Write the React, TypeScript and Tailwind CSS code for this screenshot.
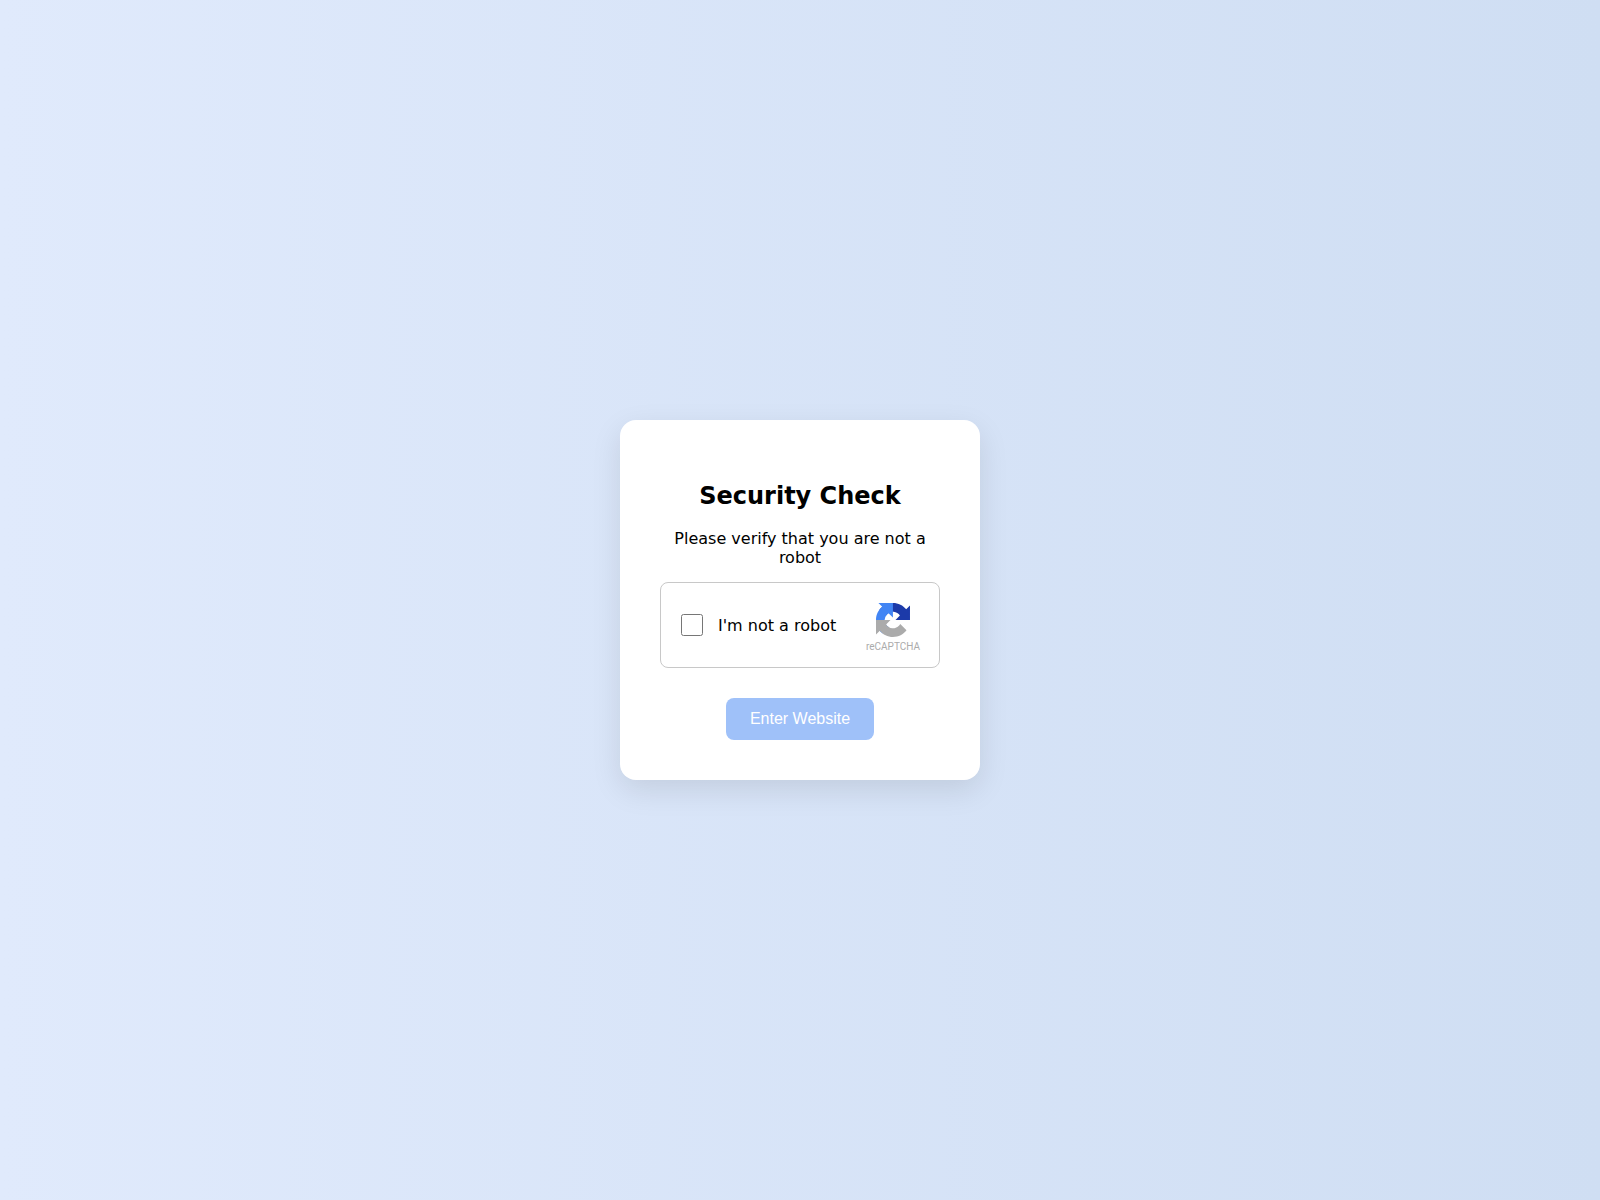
import { useState } from 'react';

function RecaptchaLogo() {
  return (
    <div className="flex w-13 shrink-0 flex-col items-center pt-[5px]">
      <svg viewBox="0 0 64 64" className="h-[34px] w-[34px]" aria-hidden="true">
        <path fill="#1c3aa9" d="M64 31.955l-.033-1.37V4.687l-7.16 7.16C50.948 4.674 42.033.093 32.05.093c-10.4 0-19.622 4.96-25.458 12.64l11.736 11.86a15.55 15.55 0 0 1 4.754-5.334c2.05-1.6 4.952-2.906 8.968-2.906.485 0 .86.057 1.135.163 4.976.393 9.288 3.14 11.828 7.124l-8.307 8.307L64 31.953" />
        <path fill="#4285f4" d="M31.862.094l-1.37.033H4.594l7.16 7.16C4.58 13.147 0 22.06 0 32.046c0 10.4 4.96 19.622 12.64 25.458L24.5 45.768a15.55 15.55 0 0 1-5.334-4.754c-1.6-2.05-2.906-4.952-2.906-8.968 0-.485.057-.86.163-1.135.393-4.976 3.14-9.288 7.124-11.828l8.307 8.307L31.86.095" />
        <path fill="#ababab" d="M.001 32.045l.033 1.37v25.898l7.16-7.16c5.86 7.173 14.774 11.754 24.76 11.754 10.4 0 19.622-4.96 25.458-12.64l-11.736-11.86a15.55 15.55 0 0 1-4.754 5.334c-2.05 1.6-4.952 2.906-8.968 2.906-.485 0-.86-.057-1.135-.163-4.976-.393-9.288-3.14-11.828-7.124l8.307-8.307c-10.522.04-22.4.066-27.295-.005" />
      </svg>
      <span className="mt-[5px] font-['Roboto',sans-serif] text-[10px] leading-[10px] text-[#ababab]">reCAPTCHA</span>
    </div>
  );
}

export default function App() {
  const [checked, setChecked] = useState(false);

  return (
    <main className="flex min-h-screen items-center justify-center bg-linear-to-r/srgb from-[#e0eafc] to-[#cfdef3] font-[Verdana,'DejaVu_Sans',sans-serif] text-black">
      <div className="w-full max-w-[360px] rounded-2xl bg-white p-10 text-center shadow-[0_10px_30px_rgba(0,0,0,0.1)]">
        <h2 className="mt-[22px] text-2xl leading-7 font-bold">Security Check</h2>
        <p className="mt-[19px] text-base leading-[19px]">Please verify that you are not a robot</p>

        <div className="mt-[15px] flex items-center justify-between rounded-lg border border-[#c8c8c8] px-5 py-[15px]">
          <label className="flex items-center gap-[15px]">
            <input
              type="checkbox"
              checked={checked}
              onChange={(e) => setChecked(e.target.checked)}
              className="size-[22px]"
            />
            <span className="pt-0.5 text-base leading-5">I'm not a robot</span>
          </label>
          <RecaptchaLogo />
        </div>

        <button
          type="button"
          disabled={!checked}
          className="mt-[30px] rounded-lg bg-[#4285f4] px-6 py-3 font-['Liberation_Sans',sans-serif] text-base leading-[18px] text-white disabled:bg-[#9fc1f9]"
        >
          Enter Website
        </button>
      </div>
    </main>
  );
}
